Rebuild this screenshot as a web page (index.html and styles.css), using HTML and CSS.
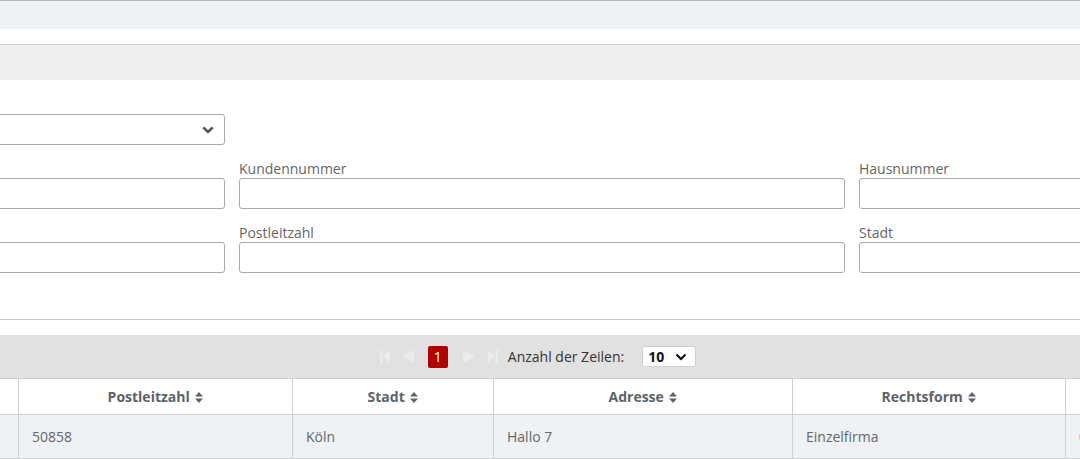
FILE: index.html
```html
<!DOCTYPE html>
<html lang="de">
<head>
<meta charset="utf-8">
<title>Kundensuche</title>
<link rel="stylesheet" href="styles.css">
</head>
<body>
<div class="topbar"></div>
<div class="panel-head"></div>
<div class="page">
  <div class="wrap">
    <form class="filters">
      <div class="field">
        <span class="lbl"></span>
        <div class="select-box"><svg class="chev" width="12" height="8" viewBox="0 0 12 8"><path d="M1.3 1.3 L6 6 L10.7 1.3" fill="none" stroke="#555" stroke-width="2.6"/></svg></div>
      </div>
      <div class="field"></div>
      <div class="field"></div>

      <div class="field">
        <span class="lbl"></span>
        <div class="input"></div>
      </div>
      <div class="field">
        <label class="lbl">Kundennummer</label>
        <div class="input"></div>
      </div>
      <div class="field">
        <label class="lbl">Hausnummer</label>
        <div class="input"></div>
      </div>

      <div class="field">
        <span class="lbl"></span>
        <div class="input"></div>
      </div>
      <div class="field">
        <label class="lbl">Postleitzahl</label>
        <div class="input"></div>
      </div>
      <div class="field">
        <label class="lbl">Stadt</label>
        <div class="input"></div>
      </div>
    </form>
  </div>
  <div class="divider"></div>
  <div class="wrap">
    <div class="pager">
      <svg class="pg-ic pg-first" width="10" height="13" viewBox="0 0 10 13"><rect x="0" y="0" width="2.5" height="13" fill="#ececec"/><path d="M10 0 L3 6.5 L10 13 Z" fill="#ececec"/></svg>
      <svg class="pg-ic pg-prev" width="12" height="13" viewBox="0 0 12 13"><path d="M12 0 L0 6.5 L12 13 Z" fill="#ececec"/></svg>
      <span class="pg-page">1</span>
      <svg class="pg-ic pg-next" width="12" height="13" viewBox="0 0 12 13"><path d="M0 0 L12 6.5 L0 13 Z" fill="#ececec"/></svg>
      <svg class="pg-ic pg-last" width="10" height="13" viewBox="0 0 10 13"><path d="M0 0 L7 6.5 L0 13 Z" fill="#ececec"/><rect x="7.5" y="0" width="2.5" height="13" fill="#ececec"/></svg>
      <span class="pg-label">Anzahl der Zeilen:</span>
      <div class="pg-select"><span>10</span><svg width="12" height="8" viewBox="0 0 12 8"><path d="M1.5 1.5 L6 6 L10.5 1.5" fill="none" stroke="#111" stroke-width="2.2"/></svg></div>
    </div>
    <table class="grid">
      <colgroup>
        <col class="c0"><col class="c1"><col class="c2"><col class="c3"><col class="c4"><col class="c5">
      </colgroup>
      <thead>
        <tr>
          <th></th>
          <th>Postleitzahl <svg class="sort" width="8" height="11" viewBox="0 0 8 11"><path d="M0 4.5 L4 0 L8 4.5 Z M0 6.5 L4 11 L8 6.5 Z" fill="#5c636a"/></svg></th>
          <th>Stadt <svg class="sort" width="8" height="11" viewBox="0 0 8 11"><path d="M0 4.5 L4 0 L8 4.5 Z M0 6.5 L4 11 L8 6.5 Z" fill="#5c636a"/></svg></th>
          <th>Adresse <svg class="sort" width="8" height="11" viewBox="0 0 8 11"><path d="M0 4.5 L4 0 L8 4.5 Z M0 6.5 L4 11 L8 6.5 Z" fill="#5c636a"/></svg></th>
          <th>Rechtsform <svg class="sort" width="8" height="11" viewBox="0 0 8 11"><path d="M0 4.5 L4 0 L8 4.5 Z M0 6.5 L4 11 L8 6.5 Z" fill="#5c636a"/></svg></th>
          <th></th>
        </tr>
      </thead>
      <tbody>
        <tr>
          <td></td>
          <td>50858</td>
          <td>Köln</td>
          <td>Hallo 7</td>
          <td>Einzelfirma</td>
          <td>0</td>
        </tr>
      </tbody>
    </table>
  </div>
</div>
</body>
</html>
```
FILE: styles.css
```css
html, body {
  margin: 0;
  padding: 0;
  background: #fff;
  overflow: hidden;
}
body {
  font-family: "Open Sans", "Liberation Sans", sans-serif;
  font-size: 14px;
  color: #666;
}
.topbar {
  border-top: 1px solid #b1b6bb;
  height: 28px;
  background: #eef2f5;
  margin-bottom: 15px;
}
.panel-head {
  border-top: 1px solid #c9c9cd;
  height: 35px;
  background: #efefef;
}
.page {
  width: 100%;
  overflow: hidden;
}
.wrap {
  width: 1846px;
  margin-left: -381px;
}
.filters {
  display: grid;
  grid-template-columns: 606px 606px 606px;
  column-gap: 14px;
  row-gap: 14px;
  padding: 15px 0 46px;
  margin: 0;
}
.field {
  display: flex;
  flex-direction: column;
}
.lbl {
  display: block;
  height: 19px;
  line-height: 19px;
  font-size: 14px;
  color: #666;
  white-space: nowrap;
}
.input, .select-box {
  box-sizing: border-box;
  height: 31px;
  border: 1px solid #a9a9a9;
  border-radius: 3px;
  background: #fff;
}
.select-box {
  display: flex;
  align-items: center;
  justify-content: flex-end;
  padding-right: 10px;
}
.divider {
  border-top: 1px solid #c8c8c8;
  height: 15px;
}
.pager {
  box-sizing: border-box;
  height: 43px;
  background: #e1e1e1;
  display: flex;
  align-items: center;
  justify-content: center;
  padding-right: 8px;
}
.pg-ic { display: block; }
.pg-first { margin-right: 12px; }
.pg-prev { margin-right: 14px; }
.pg-page {
  display: inline-flex;
  align-items: center;
  justify-content: center;
  width: 20px;
  height: 22px;
  background: #b00000;
  color: #fff;
  border-radius: 2px;
  font-size: 14px;
  margin-right: 15px;
}
.pg-next { margin-right: 13px; }
.pg-last { margin-right: 10px; }
.pg-label {
  color: #333;
  font-size: 14px;
  margin-right: 18px;
}
.pg-select {
  box-sizing: border-box;
  width: 54px;
  height: 21px;
  background: #fff;
  border: 1px solid #cfcfcf;
  border-radius: 2px;
  display: flex;
  align-items: center;
  justify-content: space-between;
  padding: 0 8px 0 5px;
  font-weight: 700;
  color: #111;
  font-size: 14px;
}
.grid {
  width: 1846px;
  border-collapse: collapse;
  table-layout: fixed;
}
.c0 { width: 399px; }
.c1 { width: 274px; }
.c2 { width: 201px; }
.c3 { width: 299px; }
.c4 { width: 273px; }
.c5 { width: 400px; }
.grid th, .grid td {
  border: 1px solid #ccd0d3;
  white-space: nowrap;
  overflow: hidden;
}
.grid th {
  height: 35px;
  padding: 0;
  background: #fff;
  color: #5c636a;
  font-weight: 700;
  font-size: 14px;
  text-align: center;
}
.grid th .sort { vertical-align: -1px; margin-left: 2px; }
.grid td {
  height: 43px;
  padding: 0 13px;
  background: #eef2f5;
  color: #666;
  font-size: 14px;
}
```
